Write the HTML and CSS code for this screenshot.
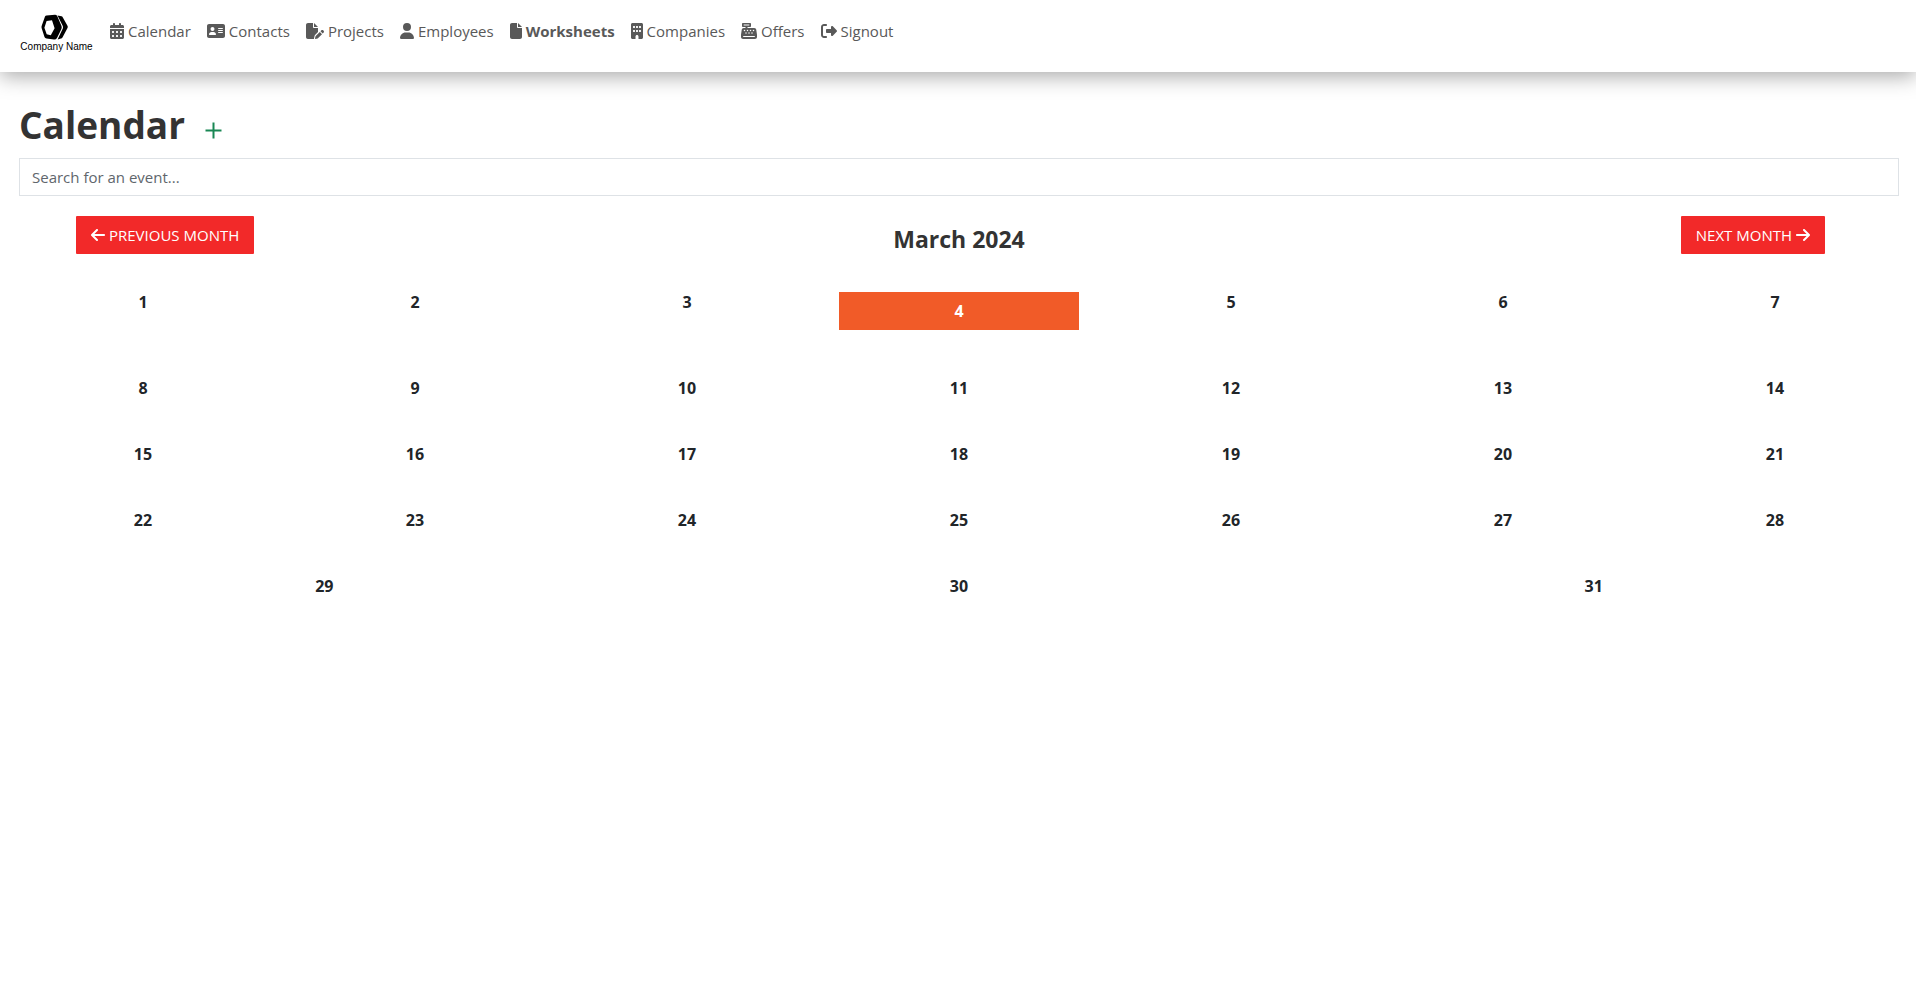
FILE: index.html
```html
<!DOCTYPE html>
<html lang="en">
<head>
<meta charset="utf-8">
<title>Calendar</title>
<link rel="stylesheet" href="styles.css">
</head>
<body>
<header class="navbar">
  <a class="brand" href="#">
    <svg class="brand-mark" viewBox="0 0 28 27" aria-hidden="true"><path fill-rule="evenodd" d="M5.500 1.500 14 .8Q15.500 .8 16.200 2L20.500 12Q21 13.500 20.400 15L16 24Q15 25.800 13 25.600L5.500 24.600Q4 24.300 3.500 23L.6 14Q.3 12.800 .8 11.500L4 2.600Q4.500 1.600 5.500 1.500ZM5.600 7 3.400 13.800 5.700 20.200 9.800 21.200 13.600 14.200 11 6.200Z"/><path d="M16.500 1.600 20.500 2.200Q21.300 2.400 21.700 3.200L26.600 12Q27 13 26.500 14L21.600 23.200Q21 24.300 20 24.600L16.600 25.600 21.800 14.500Q22.300 13.200 21.800 12Z"/></svg>
    <span class="brand-name">Company Name</span>
  </a>
  <nav class="menu">
    <a class="menu-link" href="#"><svg class="icon" viewBox="0 0 448 512" aria-hidden="true"><path d="M128 0c17.700 0 32 14.300 32 32V64H288V32c0-17.700 14.300-32 32-32s32 14.300 32 32V64h48c26.500 0 48 21.500 48 48v48H0V112C0 85.500 21.500 64 48 64H96V32c0-17.700 14.300-32 32-32zM0 192H448V464c0 26.500-21.500 48-48 48H48c-26.500 0-48-21.500-48-48V192zm64 80v32c0 8.800 7.200 16 16 16h32c8.800 0 16-7.200 16-16V272c0-8.800-7.200-16-16-16H80c-8.800 0-16 7.200-16 16zm128 0v32c0 8.800 7.200 16 16 16h32c8.800 0 16-7.200 16-16V272c0-8.800-7.200-16-16-16H208c-8.800 0-16 7.200-16 16zm144-16c-8.800 0-16 7.200-16 16v32c0 8.800 7.200 16 16 16h32c8.800 0 16-7.200 16-16V272c0-8.800-7.200-16-16-16H336zM64 400v32c0 8.800 7.200 16 16 16h32c8.800 0 16-7.200 16-16V400c0-8.800-7.200-16-16-16H80c-8.800 0-16 7.200-16 16zm144-16c-8.800 0-16 7.200-16 16v32c0 8.800 7.200 16 16 16h32c8.800 0 16-7.200 16-16V400c0-8.800-7.200-16-16-16H208zm112 16v32c0 8.800 7.200 16 16 16h32c8.800 0 16-7.200 16-16V400c0-8.800-7.200-16-16-16H336c-8.800 0-16 7.200-16 16z"/></svg>Calendar</a>
    <a class="menu-link" href="#"><svg class="icon" viewBox="0 0 576 512" aria-hidden="true"><path d="M64 32C28.700 32 0 60.700 0 96V416c0 35.300 28.700 64 64 64H512c35.300 0 64-28.700 64-64V96c0-35.300-28.700-64-64-64H64zm80 256h64c44.200 0 80 35.800 80 80c0 8.800-7.200 16-16 16H80c-8.800 0-16-7.200-16-16c0-44.200 35.800-80 80-80zm-32-96a64 64 0 1 1 128 0 64 64 0 1 1-128 0zm256-32H496c8.800 0 16 7.200 16 16s-7.200 16-16 16H368c-8.800 0-16-7.200-16-16s7.200-16 16-16zm0 64H496c8.800 0 16 7.200 16 16s-7.200 16-16 16H368c-8.800 0-16-7.200-16-16s7.200-16 16-16zm0 64H496c8.800 0 16 7.200 16 16s-7.200 16-16 16H368c-8.800 0-16-7.200-16-16s7.200-16 16-16z"/></svg>Contacts</a>
    <a class="menu-link" href="#"><svg class="icon" viewBox="0 0 576 512" aria-hidden="true"><path d="M0 64C0 28.700 28.700 0 64 0H224V128c0 17.700 14.300 32 32 32H384V285.700l-86.800 86.800c-10.300 10.300-17.500 23.100-21 37.200l-18.700 74.900c-2.300 9.200-1.800 18.800 1.300 27.500H64c-35.300 0-64-28.700-64-64V64zm384 64H256V0L384 128zM549.800 235.700l14.400 14.400c15.600 15.600 15.600 40.900 0 56.600l-29.400 29.400-71-71 29.400-29.400c15.600-15.600 40.900-15.600 56.600 0zM311.900 417L441.100 287.800l71 71L382.900 487.900c-4.100 4.100-9.200 7-14.900 8.400l-60.100 15c-5.500 1.400-11.200-.2-15.200-4.200s-5.600-9.700-4.200-15.200l15-60.100c1.400-5.600 4.300-10.800 8.400-14.900z"/></svg>Projects</a>
    <a class="menu-link" href="#"><svg class="icon" viewBox="0 0 448 512" aria-hidden="true"><path d="M224 256A128 128 0 1 0 224 0a128 128 0 1 0 0 256zm-45.700 48C79.800 304 0 383.800 0 482.300C0 498.700 13.300 512 29.700 512H418.300c16.400 0 29.700-13.300 29.700-29.700C448 383.800 368.200 304 269.700 304H178.300z"/></svg>Employees</a>
    <a class="menu-link active" href="#" aria-current="page"><svg class="icon" viewBox="0 0 384 512" aria-hidden="true"><path d="M0 64C0 28.700 28.700 0 64 0H224V128c0 17.700 14.300 32 32 32H384V448c0 35.300-28.700 64-64 64H64c-35.300 0-64-28.700-64-64V64zm384 64H256V0L384 128z"/></svg>Worksheets</a>
    <a class="menu-link" href="#"><svg class="icon" viewBox="0 0 384 512" aria-hidden="true"><path d="M48 0C21.500 0 0 21.500 0 48V464c0 26.500 21.500 48 48 48h96V432c0-26.500 21.500-48 48-48s48 21.500 48 48v80h96c26.500 0 48-21.500 48-48V48c0-26.500-21.500-48-48-48H48zM64 240c0-8.800 7.200-16 16-16h32c8.800 0 16 7.200 16 16v32c0 8.800-7.200 16-16 16H80c-8.800 0-16-7.200-16-16V240zm112-16h32c8.800 0 16 7.200 16 16v32c0 8.800-7.200 16-16 16H176c-8.800 0-16-7.200-16-16V240c0-8.800 7.200-16 16-16zm80 16c0-8.800 7.200-16 16-16h32c8.800 0 16 7.200 16 16v32c0 8.800-7.200 16-16 16H272c-8.800 0-16-7.200-16-16V240zM80 96h32c8.800 0 16 7.200 16 16v32c0 8.800-7.200 16-16 16H80c-8.800 0-16-7.200-16-16V112c0-8.800 7.200-16 16-16zm80 16c0-8.800 7.200-16 16-16h32c8.800 0 16 7.200 16 16v32c0 8.800-7.200 16-16 16H176c-8.800 0-16-7.200-16-16V112zM272 96h32c8.800 0 16 7.200 16 16v32c0 8.800-7.200 16-16 16H272c-8.800 0-16-7.200-16-16V112c0-8.800 7.200-16 16-16z"/></svg>Companies</a>
    <a class="menu-link" href="#"><svg class="icon" viewBox="0 0 512 512" aria-hidden="true"><path fill-rule="evenodd" d="M64 0C46.300 0 32 14.300 32 32V96c0 17.700 14.300 32 32 32h80v32H87c-31.600 0-58.500 23.100-63.300 54.400L1.100 364.100C.4 368.800 0 373.600 0 378.400V448c0 35.300 28.700 64 64 64H448c35.300 0 64-28.700 64-64V378.400c0-4.800-.4-9.600-1.100-14.400L488.200 214.400C483.500 183.100 456.600 160 425 160H208V128h80c17.700 0 32-14.300 32-32V32c0-17.700-14.300-32-32-32H64zM96 48H256c8.800 0 16 7.200 16 16s-7.200 16-16 16H96c-8.800 0-16-7.200-16-16s7.200-16 16-16zM64 432c0-8.800 7.200-16 16-16H432c8.800 0 16 7.200 16 16s-7.200 16-16 16H80c-8.800 0-16-7.200-16-16zm48-168a24 24 0 1 1 0-48 24 24 0 1 1 0 48zm120-24a24 24 0 1 1-48 0 24 24 0 1 1 48 0zm-72 104a24 24 0 1 1 0-48 24 24 0 1 1 0 48zM328 240a24 24 0 1 1-48 0 24 24 0 1 1 48 0zm-72 104a24 24 0 1 1 0-48 24 24 0 1 1 0 48zM424 240a24 24 0 1 1-48 0 24 24 0 1 1 48 0zm-72 104a24 24 0 1 1 0-48 24 24 0 1 1 0 48z"/></svg>Offers</a>
    <a class="menu-link" href="#"><svg class="icon" viewBox="0 0 512 512" aria-hidden="true"><path d="M377.900 105.900L500.700 228.700c7.200 7.200 11.300 17.100 11.300 27.300s-4.100 20.100-11.300 27.300L377.900 406.100c-6.400 6.400-15 9.900-24 9.900c-18.700 0-33.900-15.200-33.900-33.900l0-62.100-128 0c-17.700 0-32-14.300-32-32l0-64c0-17.700 14.300-32 32-32l128 0 0-62.100c0-18.700 15.200-33.900 33.900-33.900c9 0 17.600 3.600 24 9.900zM160 96L96 96c-17.700 0-32 14.300-32 32l0 256c0 17.700 14.300 32 32 32l64 0c17.700 0 32 14.300 32 32s-14.300 32-32 32l-64 0c-53 0-96-43-96-96L0 128C0 75 43 32 96 32l64 0c17.700 0 32 14.300 32 32s-14.300 32-32 32z"/></svg>Signout</a>
  </nav>
</header>
<main class="page">
  <div class="page-head">
    <h1 class="page-title">Calendar</h1>
    <button class="add" type="button" aria-label="Add event"><svg class="add-icon" viewBox="0 0 17 17" aria-hidden="true"><path d="M8.500 .5v16M.5 8.500h16"/></svg></button>
  </div>
  <input class="search" type="search" placeholder="Search for an event..." aria-label="Search for an event">
  <div class="month-bar">
    <button class="month-button prev" type="button"><svg class="icon" viewBox="0 0 448 512" aria-hidden="true"><path d="M9.400 233.400c-12.500 12.500-12.500 32.800 0 45.300l160 160c12.500 12.500 32.800 12.500 45.300 0s12.500-32.800 0-45.300L109.200 288 416 288c17.700 0 32-14.300 32-32s-14.300-32-32-32l-306.700 0L214.600 118.600c12.500-12.500 12.500-32.800 0-45.300s-32.800-12.500-45.300 0l-160 160z"/></svg>PREVIOUS MONTH</button>
    <h2 class="month-title">March 2024</h2>
    <button class="month-button next" type="button">NEXT MONTH<svg class="icon" viewBox="0 0 448 512" aria-hidden="true"><path d="M438.600 278.600c12.500-12.500 12.500-32.800 0-45.300l-160-160c-12.500-12.500-32.800-12.500-45.300 0s-12.500 32.800 0 45.300L338.800 224 32 224c-17.700 0-32 14.300-32 32s14.300 32 32 32l306.700 0L233.400 393.400c-12.500 12.500-12.500 32.800 0 45.300s32.800 12.500 45.300 0l160-160z"/></svg></button>
  </div>
</main>
<section class="days" aria-label="Days of March 2024">
  <div class="week"><div class="day">1</div><div class="day">2</div><div class="day">3</div><div class="day today">4</div><div class="day">5</div><div class="day">6</div><div class="day">7</div></div>
  <div class="week"><div class="day">8</div><div class="day">9</div><div class="day">10</div><div class="day">11</div><div class="day">12</div><div class="day">13</div><div class="day">14</div></div>
  <div class="week"><div class="day">15</div><div class="day">16</div><div class="day">17</div><div class="day">18</div><div class="day">19</div><div class="day">20</div><div class="day">21</div></div>
  <div class="week"><div class="day">22</div><div class="day">23</div><div class="day">24</div><div class="day">25</div><div class="day">26</div><div class="day">27</div><div class="day">28</div></div>
  <div class="week"><div class="day">29</div><div class="day">30</div><div class="day">31</div></div>
</section>
</body>
</html>
```
FILE: styles.css
```css
* { box-sizing: border-box; }

body {
  margin: 0;
  background: #fff;
  color: #212529;
  font: 15px/24px "Segoe UI", "Open Sans", "Noto Sans", sans-serif;
}

.navbar {
  display: flex;
  align-items: flex-start;
  gap: 16px;
  height: 72px;
  padding: 14px 19px 0;
  box-shadow: 0 4px 20px rgba(0, 0, 0, 0.35);
}

.brand {
  display: flex;
  flex-direction: column;
  align-items: center;
  min-width: 75px;
  color: #000;
  text-decoration: none;
}

.brand-mark {
  width: 28px;
  height: 27px;
  margin-left: -4px;
}

.brand-name {
  font: 10px/12px "Liberation Sans", Arial, sans-serif;
  white-space: nowrap;
}

.menu {
  display: flex;
  gap: 16px;
  padding-top: 5px;
}

.menu-link {
  display: flex;
  align-items: center;
  gap: 4px;
  color: #595959;
  text-decoration: none;
}

.active { font-weight: 700; }

.icon {
  height: 16px;
  fill: currentColor;
}

.page { padding: 29px 17px 0 19px; }

.page-head {
  display: flex;
  align-items: center;
  gap: 20px;
  margin-bottom: 9px;
}

.page-title {
  margin: 0;
  color: #333;
  font-size: 37px;
  line-height: 48px;
  font-weight: 700;
}

.add {
  display: flex;
  padding: 10px 0 0;
  border: 0;
  background: none;
}

.add-icon {
  width: 17px;
  height: 17px;
  fill: none;
  stroke: #198754;
  stroke-width: 2;
}

.search {
  display: block;
  width: 100%;
  height: 38px;
  padding: 6px 12px;
  border: 1px solid #dee2e6;
  border-radius: 0;
  background: #fff;
  color: #212529;
  font: inherit;
  appearance: none;
}

.search::placeholder {
  color: #60666c;
  opacity: 1;
}

.month-bar {
  display: grid;
  grid-template-columns: 1fr auto 1fr;
  margin-top: 20px;
}

.month-button {
  display: flex;
  align-items: center;
  gap: 4px;
  height: 38px;
  padding: 0 15px;
  border: 0;
  border-radius: 1px;
  background: #f22929;
  color: #fff;
  font: inherit;
}

.prev {
  justify-self: start;
  margin-left: 57px;
}

.next {
  justify-self: end;
  margin-right: 74px;
}

.month-title {
  margin: 8px 0 0;
  color: #333;
  font-size: 23px;
  line-height: 30px;
  font-weight: 700;
}

.days { padding: 36px 21px 0 23px; }

.week {
  display: flex;
  align-items: flex-start;
  gap: 32px;
  margin-bottom: 42px;
}

.day {
  flex: 1;
  font-size: 16px;
  font-weight: 700;
  text-align: center;
}

.today {
  margin: 2px 0 4px;
  padding: 7px 0;
  background: #f15b28;
  color: #fff;
}
```
